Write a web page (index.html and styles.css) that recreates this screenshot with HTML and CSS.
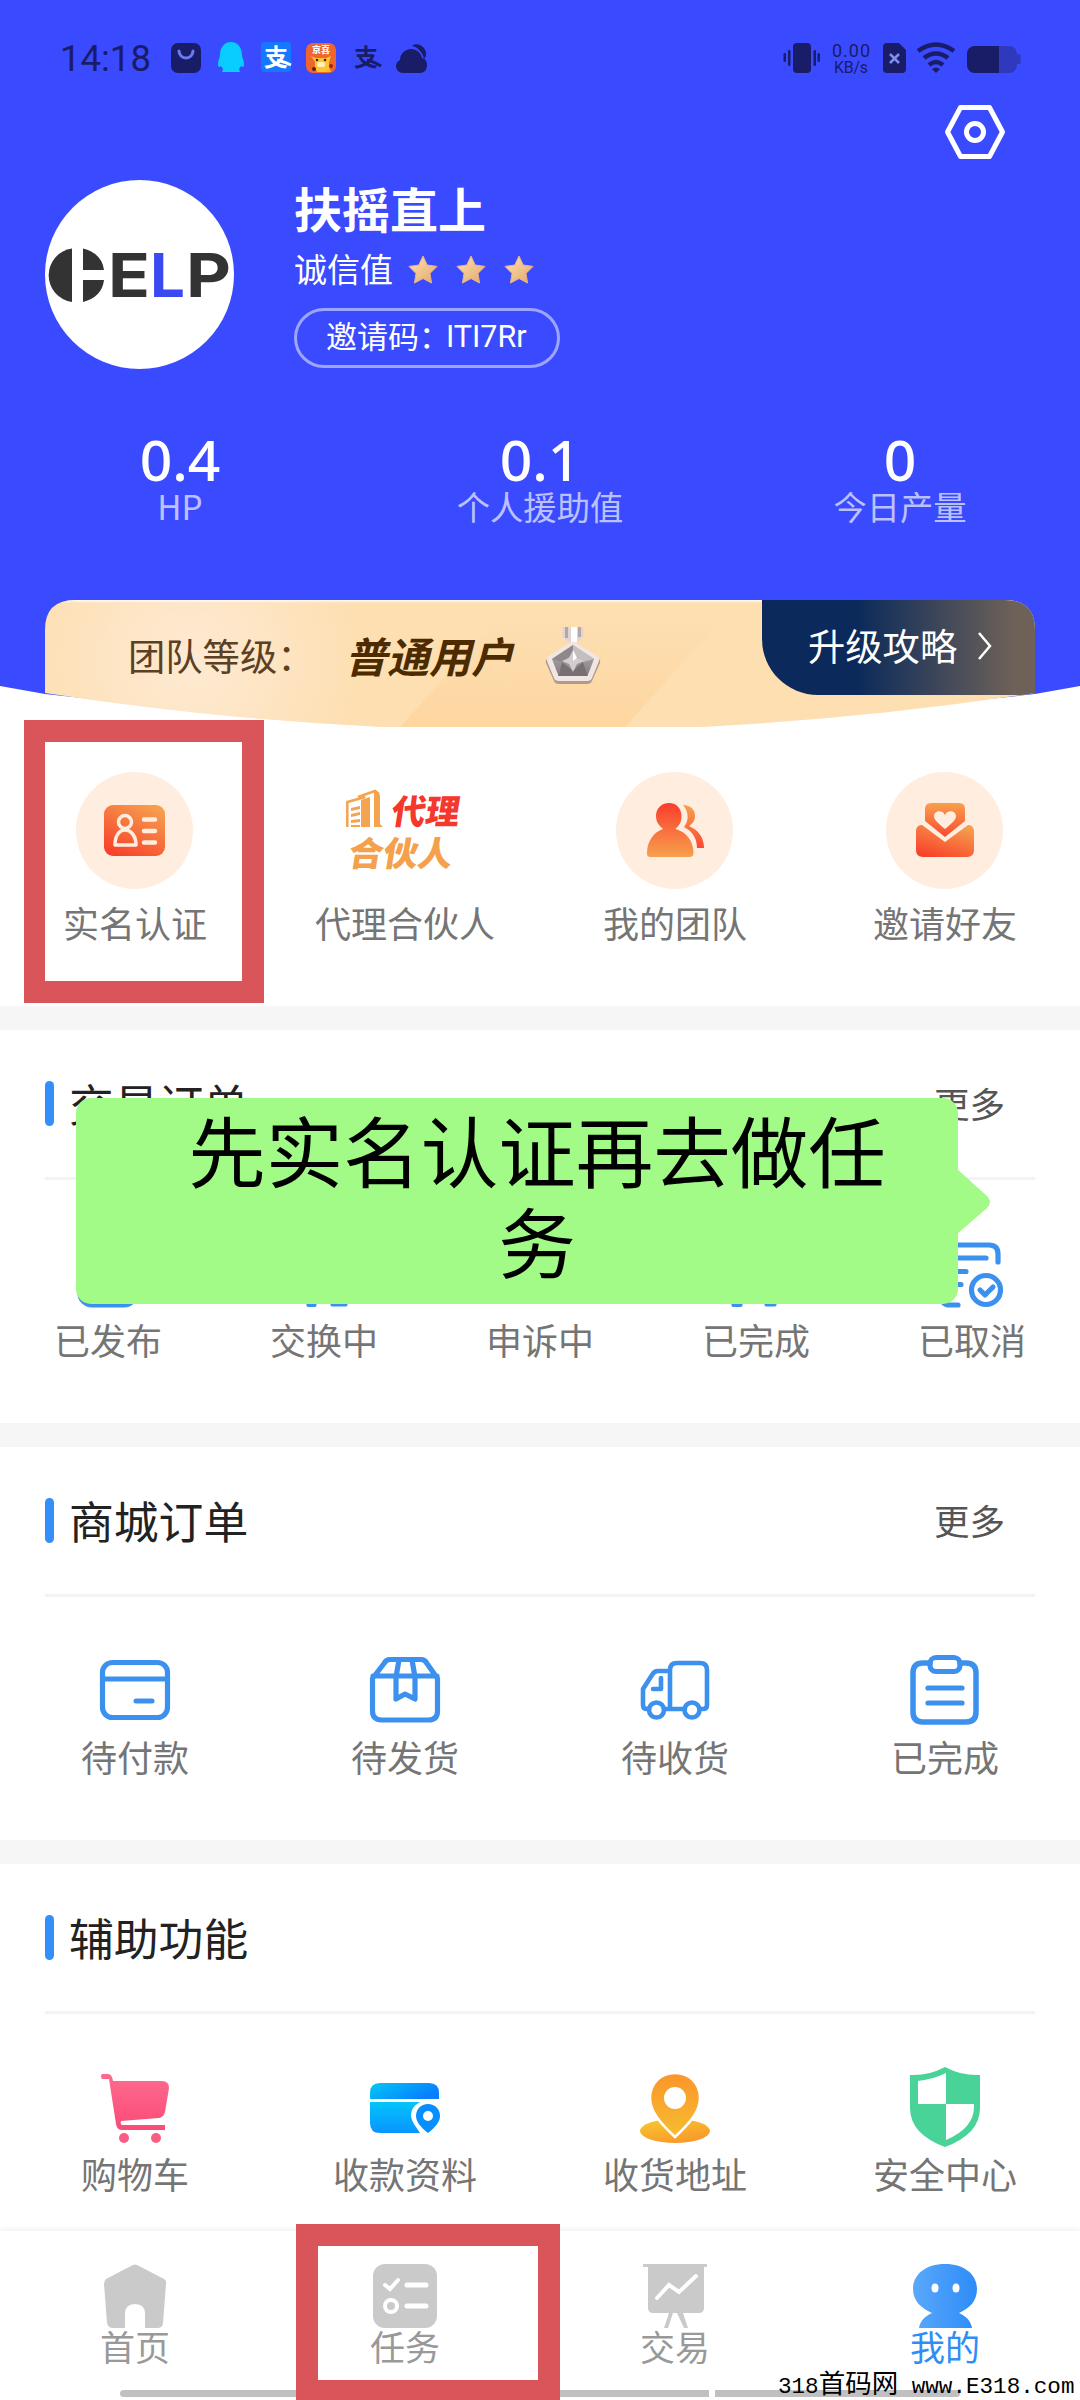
FILE: index.html
```html
<!DOCTYPE html>
<html lang="zh-CN">
<head>
<meta charset="utf-8">
<title>我的</title>
<link rel="stylesheet" href="styles.css">
</head>
<body>
<div class="app">
  <header class="hero">
    <svg class="hero-bg" width="1080" height="735" viewBox="0 0 1080 735"><path d="M0 0H1080V686L1035 694Q540 750 45 694L0 686Z" fill="#3a4aff"/></svg>

    <div class="status">
      <span class="time">14:18</span>
      <svg width="270" height="32" viewBox="0 0 270 32">
        <rect x="0" y="1" width="30" height="30" rx="7" fill="#191c66"/>
        <path d="M8 9a7 7 0 0 0 14 0" fill="none" stroke="#6a7af0" stroke-width="3" stroke-linecap="round"/>
        <path d="M60 0c7 0 11 6 11 13 0 3 2 5 2 9 0 3-1 4-3 2l-2 3 1 3H51l1-3-2-3c-2 2-3 1-3-2 0-4 2-6 2-9C49 6 53 0 60 0Z" fill="#09cdff"/>
        <rect x="90" y="0" width="30" height="30" rx="4" fill="#1677ff"/>
        <text x="93" y="24" font-size="24" font-weight="700" fill="#fff">支</text>
        <path d="M106 18q8 2 14 5" fill="none" stroke="#fff" stroke-width="3"/>
        <rect x="135" y="1" width="30" height="30" rx="7" fill="#f0652c"/>
        <text x="141" y="11" font-size="9" font-weight="900" fill="#fff">京喜</text>
        <path d="M140 14l5 2h10l5-2-2 6v5l2 5h-14l-2-5v-5Z" fill="#ffc431"/>
        <rect x="146" y="20" width="8" height="5" rx="2" fill="#fff0b8"/>
        <circle cx="146" cy="18" r="1.3" fill="#40200c"/><circle cx="154" cy="18" r="1.3" fill="#40200c"/>
        <circle cx="143" cy="27" r="2" fill="#5b2410"/><circle cx="160" cy="24" r="2" fill="#a02412"/>
        <text x="183" y="24" font-size="24" font-weight="700" fill="#191c66">支</text>
        <path d="M196 18q8 2 14 6" fill="none" stroke="#191c66" stroke-width="3"/>
        <path d="M232 31c-4 0-7-3-7-7 0-3 2-5 4-6 0-6 5-11 11-11 6 0 10 4 11 9 4 1 5 4 5 7 0 5-3 8-7 8Z" fill="#191c66"/>
        <path d="M241 4c3-3 8-2 11 1 4 4 4 9 1 12-1-6-6-12-12-13Z" fill="#191c66"/>
      </svg>
      <svg class="status-right" width="240" height="34" viewBox="0 0 240 34">
        <g fill="#191c66"><rect x="10" y="2" width="18" height="30" rx="4"/><rect x="5" y="9" width="2.500" height="16" rx="1.200"/><rect x="0.500" y="12" width="2.500" height="9" rx="1.200"/><rect x="30.500" y="9" width="2.500" height="16" rx="1.200"/><rect x="34.500" y="12" width="2.500" height="9" rx="1.200"/></g>
        <text class="net" x="49" y="15.500" font-size="18" textLength="38">0.00</text>
        <text class="net" x="51" y="31.500" font-size="16" textLength="34">KB/s</text>
        <path d="M104 2h12l7 7v19a4 4 0 0 1-4 4h-15a4 4 0 0 1-4-4V6a4 4 0 0 1 4-4Z" fill="#191c66"/>
        <path d="M107 13l9 9m0-9l-9 9" stroke="#7f8cf5" stroke-width="2.500"/>
        <g fill="none" stroke="#191c66" stroke-width="4.500"><path d="M135 10q18-13 36 0"/><path d="M141 17q12-9 24 0"/><path d="M146 24q7-6 14 0"/></g><path d="M149 28q4-3 8 0l-4 4Z" fill="#191c66"/>
        <rect x="184" y="5" width="50" height="27" rx="8" fill="#2e39bd"/><rect x="234" y="13" width="3.500" height="10" rx="1.500" fill="#2e39bd"/>
        <path d="M192 5h24v27h-24a8 8 0 0 1-8-8V13a8 8 0 0 1 8-8Z" fill="#191c66"/>
      </svg>
    </div>

    <div class="settings">
      <svg width="60" height="54" viewBox="0 0 60 54" fill="none" stroke="#fff" stroke-linejoin="round"><path d="M15.500 2.500h29L57.500 27 44.500 51.500h-29L2.500 27Z" stroke-width="5"/><circle cx="30" cy="27" r="8.500" stroke-width="5"/></svg>
    </div>

    <div class="profile">
      <svg class="avatar" width="189" height="189" viewBox="0 0 189 189">
        <circle cx="94.500" cy="94.500" r="94.500" fill="#fff"/>
        <path d="M27 68.500v53.500a27 27 0 0 1 0-53.500Z" fill="#333"/>
        <path d="M38 68.500q19 5 21 21.500H38ZM38 100h21q-2 17-21 22Z" fill="#333"/>
        <g class="brand"><text x="63" y="117" textLength="42" lengthAdjust="spacingAndGlyphs" fill="#333">E</text><text x="105" y="117" textLength="35" lengthAdjust="spacingAndGlyphs" fill="#3a4af0">L</text><text x="141" y="117" textLength="45" lengthAdjust="spacingAndGlyphs" fill="#333">P</text></g>
      </svg>
      <div class="who">
        <h1 class="name">扶摇直上</h1>
        <div class="credit"><span>诚信值</span>
          <svg width="126" height="30" viewBox="0 0 126 30"><defs><linearGradient id="star" x1="0" y1="0" x2="1" y2="1"><stop offset="0" stop-color="#ffe2b0"/><stop offset="1" stop-color="#e3a66c"/></linearGradient></defs>
            <g fill="url(#star)" stroke="#e7b488" stroke-width="1" stroke-linejoin="round"><path d="M15 1l4.200 9L29 11.400l-7 7L23.500 28 15 23.500 6.500 28 8 18.400 1 11.400 10.800 10Z"/><path d="M63 1l4.200 9L77 11.400l-7 7L71.500 28 63 23.500 54.500 28 56 18.400 49 11.400 58.800 10Z"/><path d="M111 1l4.200 9L125 11.400l-7 7 1.500 9.600-8.500-4.500-8.500 4.500 1.500-9.600-7-7 9.800-1.400Z"/></g></svg>
        </div>
        <div class="invite">邀请码：<span>ITI7Rr</span></div>
      </div>
    </div>

    <div class="stats">
      <div class="stat"><b>0.4</b><span>HP</span></div>
      <div class="stat"><b>0.1</b><span>个人援助值</span></div>
      <div class="stat"><b>0</b><span>今日产量</span></div>
    </div>

    <div class="level">
      <span class="level-label">团队等级：</span>
      <span class="level-name">普通用户</span>
      <svg width="56" height="60" viewBox="0 0 56 60">
        <defs><linearGradient id="gem" x1="0" y1="0" x2="0" y2="1"><stop offset="0" stop-color="#b9b3b4"/><stop offset="1" stop-color="#857d80"/></linearGradient></defs>
        <path d="M17.500 1h21v10l-6 5h-9l-6-5Z" fill="#e0d5d2"/><path d="M20 1h3v11h-3ZM33 1h3v10h-3Z" fill="#b5a7a5"/><path d="M26 1h6v15h-6Z" fill="#fff"/>
        <path d="M28 17L53 32Q56 34 55 37L47 55Q46 58 42 58H14Q10 58 9 55L1 37Q0 34 3 32Z" fill="#b39b8c"/>
        <path d="M28 15L52 30Q55 32 54 35L47 52Q46 55 42 55H14Q10 55 9 52L2 35Q1 32 4 30Z" fill="#f0e6e4"/>
        <path d="M28 19L49 33 42.500 50H13.500L7 33Z" fill="url(#gem)"/><path d="M7 33L28 19V28L17 36Z" fill="#8f888b"/><path d="M28 19L49 33 38 36 28 28Z" fill="#c4bebf"/><path d="M13.500 50L17 36 28 45 38 36 42.500 50Z" fill="#777073"/><path d="M28 24l4 8 7 3-7 3-4 8-4-8-7-3 7-3Z" fill="#d3cdce"/><path d="M28 24l4 8-4 3Z" fill="#fff"/>
      </svg>
      <div class="guide"><span>升级攻略</span>
        <svg width="16" height="28" viewBox="0 0 16 28"><path d="M2 1l11 13L2 27" fill="none" stroke="#fff" stroke-width="2.500"/></svg>
      </div>
    </div>
  </header>

  <nav class="shortcuts">
    <a class="item">
      <svg width="117" height="117" viewBox="0 0 117 117"><defs><linearGradient id="or" x1="0.800" y1="0" x2="0.200" y2="1"><stop offset="0" stop-color="#f6a04e"/><stop offset="1" stop-color="#f8402b"/></linearGradient></defs>
        <circle cx="58.500" cy="58.500" r="58.500" fill="#ffeee0"/><rect x="28" y="33" width="61" height="51" rx="9" fill="url(#or)"/>
        <g fill="none" stroke="#ffeee0" stroke-width="3.500"><circle cx="49" cy="50" r="6.500"/><path d="M39 73c0-9 4-15 10-15s11 6 11 15Z" stroke-linejoin="round"/></g><path d="M68 47.500h11M68 59h11M68 70.500h11" stroke="#ffeee0" stroke-width="4.500" stroke-linecap="round"/></svg>
      <span>实名认证</span></a>
    <a class="item">
      <svg class="agent-icon" width="117" height="117" viewBox="0 0 117 117">
        <g fill="none" stroke="#f4a34e" stroke-width="2.500"><path d="M1.300 55V30l18-5"/><path d="M12 25l17-6 4 3"/></g>
        <g fill="#f4a34e"><path d="M15 28l9-3v30h-9Z"/><path d="M28 19l6 4v29l3 3h-9Z"/><path d="M5 36l9-2v3l-9 2Zm0 6l9-2v3l-9 2Zm0 6l9-1v3l-9 1Zm0 5h9v2H5Z"/></g>
        <g class="agent"><text x="0" y="0" transform="translate(44 52) skewX(-9)" textLength="68" lengthAdjust="spacingAndGlyphs" fill="#f5372c">代理</text><text x="0" y="0" transform="translate(1 94) skewX(-9)" textLength="104" lengthAdjust="spacingAndGlyphs" fill="#f4a04c">合伙人</text></g></svg>
      <span>代理合伙人</span></a>
    <a class="item">
      <svg width="117" height="117" viewBox="0 0 117 117"><defs><linearGradient id="rv" x1="0" y1="0" x2="0" y2="1"><stop offset="0" stop-color="#fa3d2c"/><stop offset="1" stop-color="#f7a04d"/></linearGradient><linearGradient id="rr" x1="0" y1="0" x2="0" y2="1"><stop offset="0" stop-color="#f7a04d"/><stop offset="1" stop-color="#fa4a31"/></linearGradient></defs>
        <circle cx="58.500" cy="58.500" r="58.500" fill="#ffeee0"/><path d="M67 33c8 0 12 5 12 11 0 5-3 8-6 10 9 4 15 11 15 22h-7c0-10-5-17-13-21 5-6 5-15-1-22Z" fill="url(#rr)"/><path d="M53 31c8 0 12.500 6 12.500 13s-3 10-6 13c11 3 18 12 18 24 0 3-2 4-4 4H35c-3 0-4-1-4-4 0-12 7-21 16-24-3-3-7-6-7-13s5-13 13-13Z" fill="url(#rv)"/></svg>
      <span>我的团队</span></a>
    <a class="item">
      <svg width="117" height="117" viewBox="0 0 117 117"><circle cx="58.500" cy="58.500" r="58.500" fill="#ffeee0"/><path d="M45 31h28q6 0 6 6v12L59 65 39 49V37q0-6 6-6Z" fill="url(#rr)"/><path d="M59 57c-7-6-11-9-11-13 0-5 8-7 11-1 3-6 11-4 11 1 0 4-4 7-11 13Z" fill="#ffeee0"/><path d="M36 53l23 17 23-17q5 0 6 5v20q0 7-7 7H37q-7 0-7-7V58q1-5 6-5Z" fill="url(#or)"/></svg>
      <span>邀请好友</span></a>
  </nav>

  <section class="panel">
    <div class="head"><h2>交易订单</h2><a>更多</a></div>
    <div class="grid five">
      <a class="item"><svg width="70" height="80" viewBox="0 0 70 80" class="line"><rect x="7" y="7" width="56" height="65" rx="12"/><path d="M22 26h28M22 40h28"/></svg><span>已发布</span></a>
      <a class="item"><svg width="70" height="80" viewBox="0 0 70 80" class="line"><rect x="5" y="15" width="60" height="42" rx="8"/><path d="M20 71.500h5M44 71h12"/></svg><span>交换中</span></a>
      <a class="item"><svg width="70" height="80" viewBox="0 0 70 80" class="line"><circle cx="35" cy="38" r="25"/><path d="M35 26v15"/></svg><span>申诉中</span></a>
      <a class="item"><svg width="70" height="80" viewBox="0 0 70 80" class="line"><rect x="5" y="15" width="60" height="42" rx="8"/><path d="M13 71.500h6M46 71h7"/></svg><span>已完成</span></a>
      <a class="item"><svg width="70" height="80" viewBox="0 0 70 80" class="line"><path d="M61 29v-8q0-9-9-9H13q-8 0-8 8v44q0 8 8 8h8M15 25h34M15 38.500h14M15 51.500h9"/><circle cx="49" cy="57" r="14.500"/><path d="M43 57l5 5 8-8"/></svg><span>已取消</span></a>
    </div>
  </section>

  <section class="panel">
    <div class="head"><h2>商城订单</h2><a>更多</a></div>
    <div class="grid">
      <a class="item"><svg width="70" height="80" viewBox="0 0 70 80" class="line"><rect x="2.500" y="12.500" width="65" height="55" rx="10"/><path d="M3 29h64"/><path d="M36 51h16" stroke-width="5"/></svg><span>待付款</span></a>
      <a class="item"><svg width="70" height="80" viewBox="0 0 70 80" class="line"><path d="M20 9.500h31q4 0 6 4l10.500 15V61q0 9-9 9h-47q-9 0-9-9V28.500L14 13.500q2-4 6-4ZM3 26h64M29 10l-3 17v22l9-5 10 5V27l-3-17"/></svg><span>待发货</span></a>
      <a class="item"><svg width="70" height="80" viewBox="0 0 70 80" class="line thin"><path d="M30 59V20q0-7 7-7h23q7 0 7 7v35q0 4-4 4h-3M30 21H18q-4 0-6 4L3 39v16q0 4 4 4h2M24 59h21M21 28v11h-8"/><circle cx="16.500" cy="60" r="7.500"/><circle cx="52" cy="60" r="7.500"/></svg><span>待收货</span></a>
      <a class="item"><svg width="70" height="80" viewBox="0 0 70 80" class="line"><path d="M20 13h-7q-10 0-10 10v39q0 10 10 10h43q10 0 10-10V23q0-10-10-10h-6" stroke-width="5.500"/><rect x="20" y="7.500" width="30" height="14" rx="6"/><path d="M18 38h34M18 53h34"/></svg><span>已完成</span></a>
    </div>
  </section>

  <section class="panel last">
    <div class="head"><h2>辅助功能</h2></div>
    <div class="grid">
      <a class="item"><svg width="70" height="80" viewBox="0 0 70 80"><defs><linearGradient id="pk" x1="0" y1="0" x2="0" y2="1"><stop offset="0" stop-color="#fd6b8e"/><stop offset="1" stop-color="#fb4b78"/></linearGradient></defs><path d="M2 7h6q4 0 5 7h49q7 0 7 7l-4 24q-1 5-6 6l-38 3q-1 3 1 4h43v5H22q-5 0-6-6L9 12H2Q0 9 2 7Z" fill="url(#pk)"/><circle cx="24" cy="71" r="5" fill="#fb5c84"/><circle cx="56" cy="71" r="5" fill="#fb5c84"/></svg><span>购物车</span></a>
      <a class="item"><svg width="70" height="80" viewBox="0 0 70 80"><defs><linearGradient id="bl" x1="0" y1="0" x2="1" y2="0.400"><stop offset="0" stop-color="#03c8f4"/><stop offset="1" stop-color="#087fff"/></linearGradient><linearGradient id="bm" x1="0" y1="0" x2="0" y2="1"><stop offset="0" stop-color="#03c4fa"/><stop offset="1" stop-color="#0a94ff"/></linearGradient></defs><path d="M10 16h49q10 0 10 10v6H0v-6q0-10 10-10Z" fill="url(#bl)"/><path d="M0 35h50q-9 5-9 13 0 5 5 12l4 6H10Q0 66 0 56Z" fill="url(#bm)"/><path d="M58 37c7 0 12 5 12 12 0 5-4 11-12 17-8-6-12-12-12-17 0-7 5-12 12-12Z" fill="#078eff"/><circle cx="58" cy="49" r="5" fill="#fff"/></svg><span>收款资料</span></a>
      <a class="item"><svg width="70" height="80" viewBox="0 0 70 80"><defs><linearGradient id="yl" x1="0" y1="0" x2="0.500" y2="1"><stop offset="0" stop-color="#f6cb30"/><stop offset="1" stop-color="#f99a2a"/></linearGradient><linearGradient id="yp" x1="0" y1="0" x2="0" y2="1"><stop offset="0" stop-color="#fb952a"/><stop offset="1" stop-color="#f6bd30"/></linearGradient></defs><ellipse cx="35" cy="64" rx="35" ry="12" fill="url(#yl)"/><path d="M35 6c14 0 25 10 25 25 0 13-9 24-25 39C19 55 10 44 10 31 10 16 21 6 35 6Z" fill="url(#yp)" stroke="#fff" stroke-width="2.500"/><circle cx="35" cy="31" r="11" fill="#fff"/></svg><span>收货地址</span></a>
      <a class="item"><svg width="70" height="80" viewBox="0 0 70 80"><path d="M35 0q17 9 35 8v33q0 26-35 39Q0 67 0 41V8q18 1 35-8Z" fill="#49d398"/><path d="M36 6q-12 6-28 8v23h28ZM36 37h28v3q0 21-28 33Z" fill="#fff"/></svg><span>安全中心</span></a>
    </div>
  </section>

  <footer class="tabs">
    <a class="tab"><svg width="64" height="64" viewBox="0 0 64 64"><path d="M28 2q4-3 8 0l25 13q3 2 2 5l-3 39q0 5-6 5H42V50q0-10-10-10t-10 10v14H10q-5 0-6-5L1 20q0-3 2-5Z" fill="#cacaca"/></svg><span>首页</span></a>
    <a class="tab"><svg width="64" height="64" viewBox="0 0 64 64"><rect width="64" height="64" rx="12" fill="#cacaca"/><g fill="none" stroke="#fff" stroke-linecap="round" stroke-width="4"><path d="M12 21l5 4 8-9"/><circle cx="18" cy="42" r="6"/><path d="M34 21h19M34 42h19" stroke-width="5"/></g></svg><span>任务</span></a>
    <a class="tab"><svg width="64" height="64" viewBox="0 0 64 64"><path d="M0 0h64v3h-3v41q0 5-5 5H40l5 15h-4L34 49h-4L25 64h-4l5-15H10q-5 0-5-5V3H0Z" fill="#cacaca"/><path d="M14 34l12-13 10 7 17-16" fill="none" stroke="#fff" stroke-width="4" stroke-linecap="round"/></svg><span>交易</span></a>
    <a class="tab on"><svg width="64" height="64" viewBox="0 0 64 64"><defs><linearGradient id="me" x1="0" y1="0" x2="1" y2="0"><stop offset="0" stop-color="#5aa8fb"/><stop offset="1" stop-color="#2d8cf8"/></linearGradient></defs><path d="M32 0c20 0 32 11 32 25 0 12-7 19-18 24 7 3 12 8 13 15H6c1-7 6-12 13-15C8 44 0 37 0 25 0 11 12 0 32 0Z" fill="url(#me)"/><ellipse cx="22" cy="24" rx="3.500" ry="4.500" fill="#fff"/><ellipse cx="43" cy="24" rx="3.500" ry="4.500" fill="#fff"/></svg><span>我的</span></a>
  </footer>

  <div class="gesture gesture-a"></div>
  <div class="gesture gesture-b"></div>
  <div class="mark mark-verify"></div>
  <div class="mark mark-task"></div>
  <div class="bubble">先实名认证再去做任<br>务<svg width="35" height="66" viewBox="0 0 35 66"><path d="M0 0l30 27q6 6 0 12L0 65Z" fill="#a1fb86"/></svg></div>
  <div class="watermark">318<span>首码网</span> www.E318.com</div>
</div>
</body>
</html>
```
FILE: styles.css
```css
* { box-sizing: border-box; }
body { margin: 0; background: #fff; font-family: "Noto Sans CJK SC", sans-serif; }
svg { display: block; flex: none; overflow: visible; }
h1, h2 { margin: 0; }

.app { position: relative; z-index: 0; width: 1080px; height: 2400px; overflow: hidden; display: flex; flex-direction: column; background: #fff; }

.hero { position: relative; height: 727px; display: flex; flex-direction: column; color: #fff; }
.hero-bg { position: absolute; left: 0; top: 0; z-index: -1; }

.status { display: flex; align-items: center; height: 32px; margin-top: 42px; padding: 0 58px 0 60px; }
.time { width: 111px; font: 400 36.500px/32px Roboto, sans-serif; color: #191c66; padding-top: 2px; }
.status-right { margin-left: auto; margin-right: -1px; }
.net { font-family: Roboto, sans-serif; fill: #191c66; }

.settings { display: flex; justify-content: flex-end; padding: 31px 75px 0 0; height: 106px; }

.profile { display: flex; gap: 60px; padding-left: 45px; height: 189px; }
.brand { font: 700 60px Inter, sans-serif; }
.who { display: flex; flex-direction: column; align-items: flex-start; }
.name { font-size: 48px; font-weight: 700; line-height: 60px; margin-top: -3px; }
.credit { display: flex; align-items: center; gap: 15px; height: 42px; margin-top: 12px; font-size: 33px; line-height: 38px; }
.credit span { padding-bottom: 5px; }
.invite { display: flex; width: 266px; height: 60px; margin-top: 17px; padding-left: 29px; border: 3px solid rgba(255,255,255,.5); border-radius: 30px; font-size: 31px; line-height: 48px; white-space: nowrap; }
.invite span { font: 400 30.500px/52px Roboto, sans-serif; margin-left: -4px; }

.stats { display: grid; grid-template-columns: repeat(3, 1fr); height: 231px; padding-top: 60px; text-align: center; }
.stat { display: flex; flex-direction: column; }
.stat b { height: 60px; font: 500 57px/60px "Noto Sans", sans-serif; }
.stat span { margin-top: -5px; font-size: 33.300px; line-height: 44px; color: rgba(255,255,255,.68); }

.level { position: relative; z-index: 0; display: flex; height: 127px; margin: 0 45px; padding-left: 83px; color: #5c4023; background: linear-gradient(180deg, rgba(255,255,255,.9) 0, rgba(255,255,255,0) 3px), radial-gradient(circle at 145px 60px, #feead3 0, rgba(254,234,211,0) 170px), #fddfb2; clip-path: path("M0 30Q0 0 30 0H960Q990 0 990 30V93Q495 169 0 93Z"); }
.level::before { content: ""; position: absolute; z-index: -1; left: 355px; bottom: 0; width: 225px; height: 110px; transform: skewX(-42deg); transform-origin: bottom; background: linear-gradient(180deg, rgba(254,212,155,0), #fed6a0); }
.level-label { width: 215px; font-size: 37.300px; line-height: 110px; white-space: nowrap; }
.level-name { width: 174px; padding-left: 2px; font-size: 42px; font-weight: 700; font-style: italic; line-height: 110px; color: #4d2b00; white-space: nowrap; }
.level > svg { margin: 26px 0 0 28px; }
.guide { display: flex; align-items: center; width: 273px; height: 95px; margin-left: auto; padding: 0 0 4px 46px; gap: 20px; border-radius: 0 0 0 56px; background: linear-gradient(90deg, #0b2a5b 35%, #6d6158 92%); color: #fff; font-size: 37.300px; line-height: 91px; }

.shortcuts { display: grid; grid-template-columns: repeat(4, 1fr); height: 279px; padding-top: 45px; }
.item { display: flex; flex-direction: column; align-items: center; font-size: 36px; color: #757575; line-height: 48px; }
.shortcuts svg { margin-left: -1px; }
.shortcuts span { margin-top: 9px; }
.agent { font: 900 34px "Noto Sans CJK SC", sans-serif; }

.panel { height: 417px; border-top: 24px solid #f6f6f6; padding: 0 45px; }
.panel.last { height: 389px; }
.head { display: flex; align-items: center; height: 150px; padding: 1px 30px 3px 0; border-bottom: 3px solid #f3f3f3; justify-content: space-between; }
.head h2 { display: flex; align-items: center; gap: 15px; font-size: 44.800px; font-weight: 400; line-height: 60px; color: #222; }
.head h2::before { content: ""; width: 9px; height: 45px; border-radius: 5px; background: #338ffa; position: relative; top: 1px; }
.head a { font-size: 35.500px; color: #555; line-height: 48px; }
.grid { display: grid; grid-template-columns: repeat(4, 1fr); margin: 0 -45px; padding-top: 53px; }
.five { grid-template-columns: repeat(5, 1fr); }
.grid svg { height: 80px; }
.grid span { margin-top: 2px; }
.line { fill: none; stroke: #3c91ee; stroke-width: 5.200px; stroke-linecap: round; stroke-linejoin: round; }
.thin { stroke-width: 4.600px; }

.tabs { display: grid; grid-template-columns: repeat(4, 1fr); height: 169px; padding-top: 33px; background: #fff; box-shadow: 0 -2px 5px rgba(0,0,0,.06); }
.panel.last { height: 391px; }
.tab { display: flex; flex-direction: column; align-items: center; font-size: 35px; line-height: 44px; color: #999; }
.tab span { margin-top: -4px; }
.tab.on { color: #2e8ef5; }

.gesture { position: absolute; top: 2390px; height: 7px; background: #c0c0c0; }
.gesture-a { left: 120px; width: 589px; border-radius: 4px 0 0 4px; }
.gesture-b { left: 715px; width: 245px; border-radius: 0 4px 4px 0; }
.mark { position: absolute; border: 22px solid #d9555a; }
.mark-verify { left: 24px; top: 720px; width: 240px; height: 283px; border-left-width: 21px; }
.mark-task { left: 296px; top: 2224px; width: 264px; height: 178px; }
.bubble { position: absolute; left: 76px; top: 1098px; width: 882px; height: 206px; padding: 5px 0 0 40px; border-radius: 15px; background: #a1fb86; color: #000; font-size: 77.500px; line-height: 91px; text-align: center; }
.bubble svg { position: absolute; left: 881px; top: 71px; }
.watermark { position: absolute; left: 778px; top: 2372px; height: 28px; font: 400 22.600px/28px "Liberation Mono", monospace; color: #000; white-space: pre; }
.watermark span { font: 400 26.500px/20px "Noto Sans CJK SC", sans-serif; }
```
